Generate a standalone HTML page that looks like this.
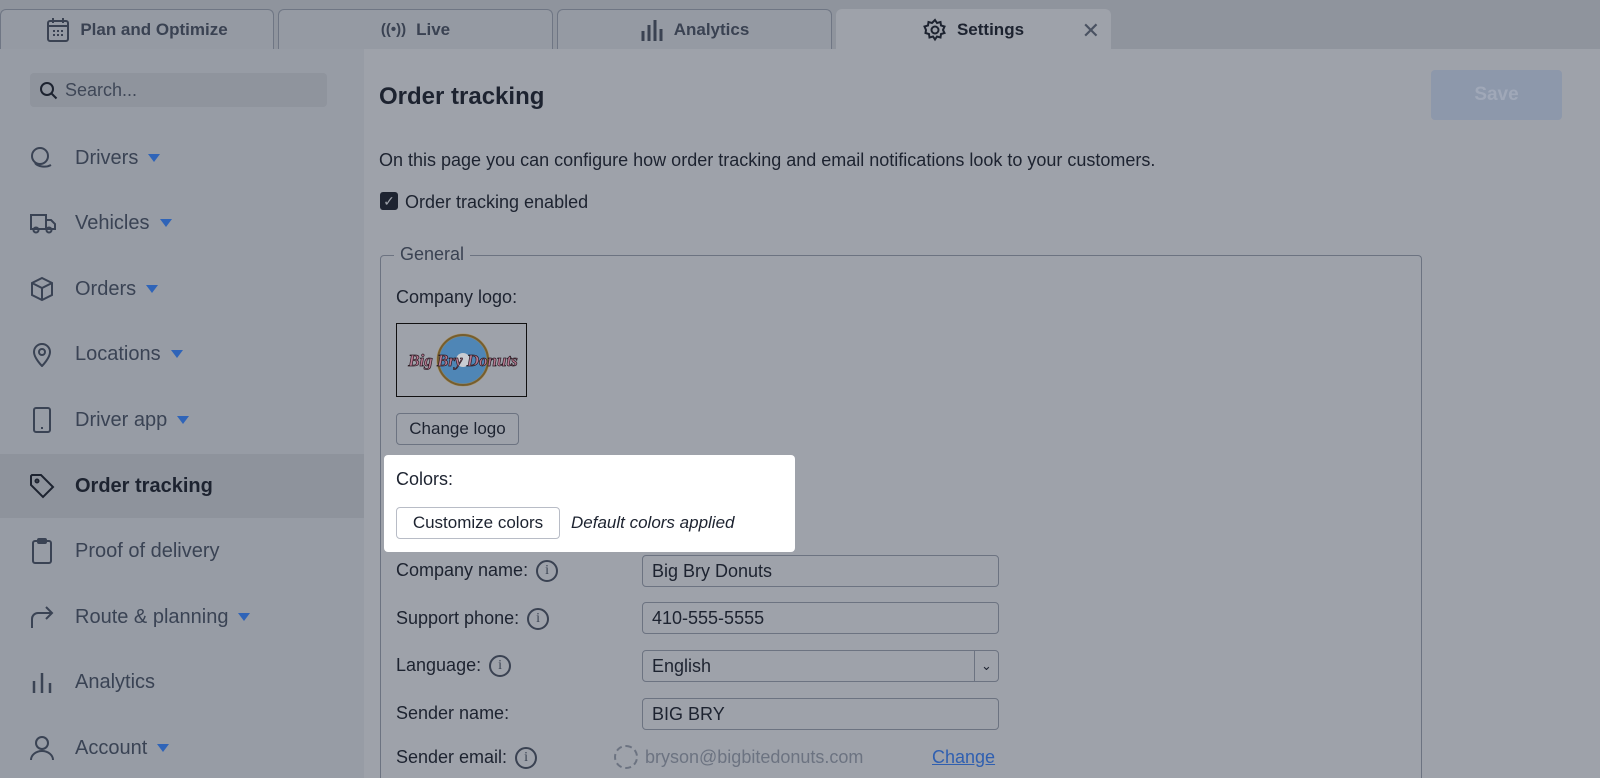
<!DOCTYPE html>
<html style="overflow:hidden;height:778px"><head><meta charset="utf-8"><style>
*{box-sizing:border-box;margin:0;padding:0}
body{width:1600px;height:778px;overflow:hidden;background:#9ea2aa;font-family:"Liberation Sans",sans-serif;color:#1d2330;position:relative}
.a{position:absolute}
.tabbar{left:0;top:0;width:1600px;height:49px;background:#8f949d}
.tab{top:9px;height:40px;background:#959aa3;border:1px solid #6f7684;border-bottom:none;border-radius:6px 6px 0 0;display:flex;align-items:center;justify-content:center;font-weight:bold;font-size:17px;color:#3a4252;gap:10px}
.tab.act{background:#9ea2aa;border-color:#9ea2aa;color:#1d2330}
.side{left:0;top:49px;width:364px;height:729px;background:#979ca5}
.nav{left:0;width:364px;height:64px;display:flex;align-items:center;font-size:20px;color:#3a4354}
.nav svg{position:absolute;left:29px}
.nav span{position:absolute;left:75px}
.tri{display:inline-block;width:0;height:0;border-left:6px solid transparent;border-right:6px solid transparent;border-top:8px solid #2f64b8;margin-left:10px;vertical-align:middle}
.lbl{font-size:18px;left:396px}
.inp{left:642px;width:357px;height:32px;border:1px solid #6c7381;border-radius:4px;background:#9ea2aa;font-size:18px;padding:5px 9px}
.btn{border:1px solid #6c7381;border-radius:4px;font-size:17px;display:flex;align-items:center;justify-content:center;background:#9ea2aa}
.info{display:inline-block;width:22px;height:22px;border:2px solid #3a4252;border-radius:50%;vertical-align:middle;margin-left:8px;position:relative}
.info:after{content:"i";position:absolute;left:0;right:0;top:1px;text-align:center;font-size:14px;font-style:normal;font-family:"Liberation Serif",serif;color:#3a4252}
</style></head><body>
<div class="a tabbar"></div>
<div class="a tab" style="left:0;width:274px"><svg width="24" height="26" viewBox="0 0 24 26" fill="none" stroke="#3a4252" stroke-width="2"><rect x="2" y="4" width="20" height="20" rx="2"/><path d="M7 1v5M17 1v5M2 9h20"/><path d="M7 14h2M11 14h2M15 14h2M7 18h2M11 18h2M15 18h2"/></svg>Plan and Optimize</div>
<div class="a tab" style="left:278px;width:275px"><span style="font-size:15px">((•))</span>Live</div>
<div class="a tab" style="left:557px;width:275px"><svg width="24" height="22" viewBox="0 0 24 22" stroke="#3a4252" stroke-width="3"><path d="M3 22V12M9 22V6M15 22V1M21 22V10"/></svg>Analytics</div>
<div class="a tab act" style="left:836px;width:275px"><svg width="24" height="24" viewBox="0 0 24 24" fill="none" stroke="#1d2330" stroke-width="2"><circle cx="12" cy="12" r="3.5"/><path d="M12 2l2 3 3.5-1 .5 3.5 3.5 1-1.5 3.5 1.5 3-3.5 1-.5 3.5-3.5-1-2 3-2-3-3.5 1-.5-3.5-3.5-1L3 12 1.5 8.5l3.5-1L5.5 4 9 5z"/></svg>Settings<span class="a" style="right:10px;top:8px;color:#4a5262;font-size:22px;font-weight:normal">✕</span></div>
<div class="a side"></div>
<div class="a" style="left:30px;top:73px;width:297px;height:34px;background:#8f949d;border-radius:4px;font-size:18px;color:#3f4757;padding:7px 0 0 35px">Search...
<svg class="a" style="left:9px;top:8px" width="19" height="19" viewBox="0 0 19 19" fill="none" stroke="#1d2330" stroke-width="2"><circle cx="8" cy="8" r="6"/><path d="M12.5 12.5l5 5"/></svg></div>
<div class="a" style="left:0;top:454px;width:364px;height:64px;background:#8e939c"></div>
<div class="a nav" style="top:126px"><svg width="26" height="26" viewBox="0 0 26 26" fill="none" stroke="#3a4354" stroke-width="2"><circle cx="11" cy="11" r="8"/><path d="M6 18a10 6 0 0 0 16 2"/></svg><span>Drivers<i class="tri"></i></span></div>
<div class="a nav" style="top:191px"><svg width="28" height="26" viewBox="0 0 28 26" fill="none" stroke="#3a4354" stroke-width="2"><path d="M2 5h15v14H2zM17 10h5l4 4v5h-9"/><circle cx="7" cy="20" r="2.5"/><circle cx="20" cy="20" r="2.5"/></svg><span>Vehicles<i class="tri"></i></span></div>
<div class="a nav" style="top:257px"><svg width="26" height="26" viewBox="0 0 26 26" fill="none" stroke="#3a4354" stroke-width="2"><path d="M13 2l10 5v12l-10 5-10-5V7zM3 7l10 5 10-5M13 12v12"/></svg><span>Orders<i class="tri"></i></span></div>
<div class="a nav" style="top:322px"><svg width="26" height="26" viewBox="0 0 26 26" fill="none" stroke="#3a4354" stroke-width="2"><path d="M13 25s-8-8-8-14a8 8 0 0 1 16 0c0 6-8 14-8 14z"/><circle cx="13" cy="11" r="3"/></svg><span>Locations<i class="tri"></i></span></div>
<div class="a nav" style="top:388px"><svg width="26" height="28" viewBox="0 0 26 28" fill="none" stroke="#3a4354" stroke-width="2"><rect x="5" y="2" width="16" height="24" rx="2"/><path d="M12 22h2"/></svg><span>Driver app<i class="tri"></i></span></div>
<div class="a nav" style="top:454px;color:#1d2330;font-weight:bold"><svg width="26" height="26" viewBox="0 0 26 26" fill="none" stroke="#1d2330" stroke-width="2"><path d="M2 3v9l12 12 10-10L12 2H3z"/><circle cx="8" cy="8" r="1.5"/></svg><span>Order tracking</span></div>
<div class="a nav" style="top:519px"><svg width="26" height="28" viewBox="0 0 26 28" fill="none" stroke="#3a4354" stroke-width="2"><rect x="4" y="4" width="18" height="22" rx="2"/><rect x="9" y="2" width="8" height="4" rx="1"/></svg><span>Proof of delivery</span></div>
<div class="a nav" style="top:585px"><svg width="26" height="26" viewBox="0 0 26 26" fill="none" stroke="#3a4354" stroke-width="2"><path d="M3 24V15a6 6 0 0 1 6-6h14M17 3l6 6-6 6"/></svg><span>Route &amp; planning<i class="tri"></i></span></div>
<div class="a nav" style="top:650px"><svg width="26" height="26" viewBox="0 0 26 26" stroke="#3a4354" stroke-width="2.5"><path d="M5 24V12M13 24V4M21 24V14"/></svg><span>Analytics</span></div>
<div class="a nav" style="top:716px"><svg width="26" height="26" viewBox="0 0 26 26" fill="none" stroke="#3a4354" stroke-width="2"><circle cx="13" cy="8" r="6"/><path d="M2 25a11 9 0 0 1 22 0"/></svg><span>Account<i class="tri"></i></span></div>

<div class="a" style="left:379px;top:83px;font-size:24px;font-weight:bold">Order tracking</div>
<div class="a btn" style="left:1431px;top:70px;width:131px;height:50px;background:#8d98ab;border:none;color:#a0a8b8;font-weight:bold;font-size:19px">Save</div>
<div class="a" style="left:379px;top:150px;font-size:18px">On this page you can configure how order tracking and email notifications look to your customers.</div>
<div class="a" style="left:380px;top:192px;width:18px;height:18px;background:#1d2330;border-radius:3px;color:#9ea2aa;font-size:14px;text-align:center;line-height:18px">✓</div>
<div class="a" style="left:405px;top:192px;font-size:18px">Order tracking enabled</div>
<div class="a" style="left:380px;top:255px;width:1042px;height:523px;border:1px solid #6c7381;border-bottom:none;border-radius:4px 4px 0 0"></div>
<div class="a" style="left:394px;top:244px;font-size:18px;color:#3a4252;background:#9ea2aa;padding:0 6px">General</div>
<div class="a lbl" style="top:287px">Company logo:</div>
<div class="a" style="left:396px;top:323px;width:131px;height:74px;border:1.5px solid #111;overflow:hidden">
<svg width="131" height="74"><circle cx="66" cy="36" r="25" fill="#4f86b6" stroke="#1a1a1a" stroke-width="2"/><circle cx="66" cy="36" r="25" fill="none" stroke="#b28a3c" stroke-width="3" opacity=".6"/><circle cx="66" cy="36" r="7" fill="#c9ccd2"/><text x="66" y="42" text-anchor="middle" font-family="Liberation Serif,serif" font-style="italic" font-weight="bold" font-size="17" fill="#b97a92" stroke="#2a1a22" stroke-width=".7">Big Bry Donuts</text></svg></div>
<div class="a btn" style="left:396px;top:413px;width:123px;height:32px">Change logo</div>
<div class="a" style="left:384px;top:455px;width:411px;height:97px;background:#fff;border-radius:4px"></div>
<div class="a lbl" style="top:469px">Colors:</div>
<div class="a btn" style="left:396px;top:507px;width:164px;height:32px;background:#fff;border-color:#b8bcc6">Customize colors</div>
<div class="a" style="left:571px;top:513px;font-size:17px;font-style:italic">Default colors applied</div>
<div class="a lbl" style="top:560px">Company name:<i class="info"></i></div>
<div class="a inp" style="top:555px">Big Bry Donuts</div>
<div class="a lbl" style="top:608px">Support phone:<i class="info"></i></div>
<div class="a inp" style="top:602px">410-555-5555</div>
<div class="a lbl" style="top:655px">Language:<i class="info"></i></div>
<div class="a inp" style="top:650px">English<span class="a" style="right:0;top:0;width:24px;height:30px;border-left:1px solid #6c7381;text-align:center;font-size:13px;line-height:30px">⌄</span></div>
<div class="a lbl" style="top:703px">Sender name:</div>
<div class="a inp" style="top:698px">BIG BRY</div>
<div class="a lbl" style="top:747px">Sender email:<i class="info"></i></div>
<div class="a" style="left:614px;top:745px;width:24px;height:24px;border:2px dashed #6c7381;border-radius:50%"></div>
<div class="a" style="left:645px;top:747px;font-size:18px;color:#6c7381">bryson@bigbitedonuts.com</div>
<div class="a" style="left:932px;top:747px;font-size:18px;color:#2f5fb0;text-decoration:underline">Change</div>
</body></html>
